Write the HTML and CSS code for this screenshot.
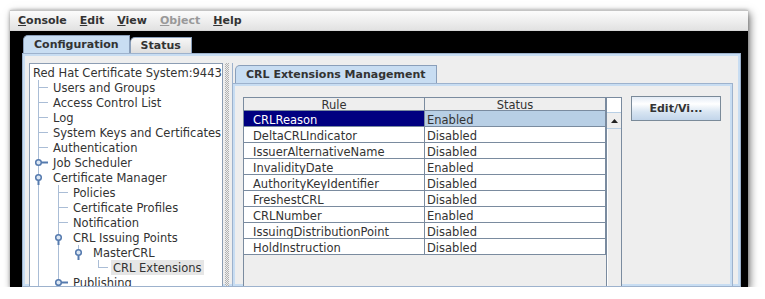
FILE: index.html
```html
<!DOCTYPE html>
<html>
<head>
<meta charset="utf-8">
<title>Console</title>
<link rel="stylesheet" href="styles.css">
</head>
<body>
<div class="window">
  <div class="menubar">
    <span class="menu"><u>C</u>onsole</span>
    <span class="menu"><u>E</u>dit</span>
    <span class="menu"><u>V</u>iew</span>
    <span class="menu disabled"><u>O</u>bject</span>
    <span class="menu"><u>H</u>elp</span>
  </div>
  <div class="frame">
    <div class="tabs">
      <div class="tab selected">Configuration</div>
      <div class="tab">Status</div>
    </div>
    <div class="panel">
      <div class="tree">
        <div class="row"><span class="label">Red Hat Certificate System:9443</span></div>
        <div class="row"><span class="seg tee"></span><span class="label">Users and Groups</span></div>
        <div class="row"><span class="seg tee"></span><span class="label">Access Control List</span></div>
        <div class="row"><span class="seg tee"></span><span class="label">Log</span></div>
        <div class="row"><span class="seg tee"></span><span class="label">System Keys and Certificates</span></div>
        <div class="row"><span class="seg tee"></span><span class="label">Authentication</span></div>
        <div class="row"><span class="seg pipe"><svg class="handle" width="20" height="15" viewBox="0 0 20 15"><line x1="8.5" y1="7.5" x2="15" y2="7.5" class="tail"/><circle cx="5.5" cy="7.5" r="2.8" class="knob"/></svg></span><span class="label">Job Scheduler</span></div>
        <div class="row"><span class="seg pipe"><svg class="handle" width="20" height="15" viewBox="0 0 20 15"><line x1="5.5" y1="10" x2="5.5" y2="15" class="tail"/><circle cx="5.5" cy="7.5" r="2.8" class="knob"/></svg></span><span class="label">Certificate Manager</span></div>
        <div class="row"><span class="seg pipe"></span><span class="seg tee"></span><span class="label">Policies</span></div>
        <div class="row"><span class="seg pipe"></span><span class="seg tee"></span><span class="label">Certificate Profiles</span></div>
        <div class="row"><span class="seg pipe"></span><span class="seg tee"></span><span class="label">Notification</span></div>
        <div class="row"><span class="seg pipe"></span><span class="seg pipe"><svg class="handle" width="20" height="15" viewBox="0 0 20 15"><line x1="5.5" y1="10" x2="5.5" y2="15" class="tail"/><circle cx="5.5" cy="7.5" r="2.8" class="knob"/></svg></span><span class="label">CRL Issuing Points</span></div>
        <div class="row"><span class="seg pipe"></span><span class="seg pipe"></span><span class="seg top"><svg class="handle" width="20" height="15" viewBox="0 0 20 15"><line x1="5.5" y1="10" x2="5.5" y2="15" class="tail"/><circle cx="5.5" cy="7.5" r="2.8" class="knob"/></svg></span><span class="label">MasterCRL</span></div>
        <div class="row"><span class="seg pipe"></span><span class="seg pipe"></span><span class="seg"></span><span class="seg ell"></span><span class="label sel">CRL Extensions</span></div>
        <div class="row"><span class="seg pipe"></span><span class="seg pipe"><svg class="handle" width="20" height="15" viewBox="0 0 20 15"><line x1="8.5" y1="7.5" x2="15" y2="7.5" class="tail"/><circle cx="5.5" cy="7.5" r="2.8" class="knob"/></svg></span><span class="label">Publishing</span></div>
      </div>
      <div class="divider"><div class="bumps"></div></div>
      <div class="right">
        <div class="rtabs"><div class="tab selected">CRL Extensions Management</div></div>
        <div class="rpanel">
          <div class="scrollpane">
            <div class="viewport">
              <div class="grid">
                <div class="th">Rule</div><div class="th">Status</div>
                <div class="td c1 selrow">CRLReason</div><div class="td c2 selrow">Enabled</div>
                <div class="td c1">DeltaCRLIndicator</div><div class="td c2">Disabled</div>
                <div class="td c1">IssuerAlternativeName</div><div class="td c2">Disabled</div>
                <div class="td c1">InvalidityDate</div><div class="td c2">Enabled</div>
                <div class="td c1">AuthorityKeyIdentifier</div><div class="td c2">Disabled</div>
                <div class="td c1">FreshestCRL</div><div class="td c2">Disabled</div>
                <div class="td c1">CRLNumber</div><div class="td c2">Enabled</div>
                <div class="td c1">IssuingDistributionPoint</div><div class="td c2">Disabled</div>
                <div class="td c1">HoldInstruction</div><div class="td c2">Disabled</div>
              </div>
            </div>
            <div class="vscroll">
              <div class="corner"></div>
              <div class="upbtn"><svg width="7" height="4" viewBox="0 0 7 4"><polygon points="0,4 7,4 3.5,0" fill="#222"/></svg></div>
              <div class="track"></div>
            </div>
          </div>
          <button class="btn">Edit/Vi...</button>
        </div>
      </div>
    </div>
  </div>
</div>
</body>
</html>
```
FILE: styles.css
```css
* { box-sizing: border-box; }

body {
  margin: 0;
  background: #ffffff;
  font-family: "DejaVu Sans", sans-serif;
  color: #333333;
}

.window {
  margin: 10px 0 0 10px;
  width: 738px;
  height: 277px;
  display: flex;
  flex-direction: column;
  background: #000000;
  box-shadow: 2px 3px 8px rgba(0, 0, 0, 0.55), 0 0 3px rgba(0, 0, 0, 0.25);
  overflow: hidden;
}

.menubar {
  height: 21px;
  flex: none;
  display: flex;
  align-items: center;
  gap: 13px;
  padding-left: 8px;
  border-top: 1px solid #c4c4c4;
  border-bottom: 1px solid #d6d6d6;
  background: linear-gradient(#fcfcfc, #e2e2e2);
  font-weight: bold;
  font-size: 11px;
}

.menu.disabled { color: #999999; }

.frame {
  flex: 1;
  min-height: 0;
  display: flex;
  flex-direction: column;
  padding: 4px 7px 0 12px;
}

.tabs {
  display: flex;
  align-items: flex-end;
  height: 18px;
  flex: none;
  padding-left: 1px;
}

.tab {
  font-weight: bold;
  font-size: 11px;
  padding: 0 10px;
  height: 16px;
  line-height: 15px;
  border: 1px solid #8a9fba;
  border-bottom: none;
  border-top-left-radius: 5px;
  background: linear-gradient(#f7f7f7, #dedede);
  white-space: nowrap;
}

.tab.selected {
  height: 18px;
  line-height: 17px;
  background: #c8ddf2;
}

.panel {
  flex: 1;
  min-height: 0;
  display: flex;
  border: 1px solid #9db2cd;
  box-shadow: inset 0 0 0 2px #c8ddf2;
  background: #eeeeee;
  padding: 9px 7px 0 6px;
}

.tree {
  width: 194px;
  flex: none;
  background: #ffffff;
  border: 1px solid #8c9db3;
  border-bottom: none;
  padding-top: 1px;
  font-size: 11.5px;
  overflow: hidden;
}

.row {
  display: flex;
  align-items: flex-start;
  height: 15px;
  padding-left: 3px;
  white-space: nowrap;
}

.seg {
  width: 20px;
  height: 15px;
  flex: none;
  background-repeat: no-repeat;
}

.seg.pipe {
  background-image: linear-gradient(#aabdd6, #aabdd6);
  background-position: 5px 0;
  background-size: 1px 15px;
}

.seg.top {
  background-image: linear-gradient(#aabdd6, #aabdd6);
  background-position: 5px 0;
  background-size: 1px 8px;
}

.seg.tee {
  background-image: linear-gradient(#aabdd6, #aabdd6), linear-gradient(#aabdd6, #aabdd6);
  background-position: 5px 0, 5px 7px;
  background-size: 1px 15px, 10px 1px;
}

.seg.ell {
  background-image: linear-gradient(#aabdd6, #aabdd6), linear-gradient(#aabdd6, #aabdd6);
  background-position: 5px 0, 5px 7px;
  background-size: 1px 8px, 10px 1px;
}

.handle { display: block; }
.handle .knob { fill: #dce7f4; stroke: #557aae; stroke-width: 1.5; }
.handle .tail { stroke: #557aae; stroke-width: 2; }

.label {
  display: block;
  height: 15px;
  padding-top: 2px;
  line-height: 13px;
}

.label.sel {
  background: #e6e6e6;
  margin-left: -2px;
  padding-left: 2px;
  padding-right: 2px;
}

.divider {
  width: 9px;
  flex: none;
  padding: 0 3px 0 2px;
}

.bumps {
  height: 100%;
  background: repeating-conic-gradient(#b0b0b0 0 25%, #eeeeee 0 50%) 0 0 / 2px 2px;
}

.right {
  flex: 1;
  min-width: 0;
  display: flex;
  flex-direction: column;
  padding-top: 2px;
  border-left: 1px solid #9db2cd;
}

.rtabs {
  display: flex;
  align-items: flex-end;
  height: 18px;
  flex: none;
  padding-left: 2px;
}

.rpanel {
  flex: 1;
  min-height: 0;
  display: flex;
  align-items: flex-start;
  gap: 9px;
  border: 1px solid #9db2cd;
  border-left: none;
  border-bottom: none;
  box-shadow: inset 0 0 0 2px #c8ddf2;
  background: #eeeeee;
  padding: 13px 0 0 10px;
}

.scrollpane {
  align-self: stretch;
  display: flex;
  border: 1px solid #7a8b9f;
  border-bottom: none;
}

.viewport {
  width: 362px;
  background: #eeeeee;
}

.grid {
  display: grid;
  grid-template-columns: 181px 181px;
  font-size: 11.5px;
}

.th {
  height: 13px;
  line-height: 13px;
  padding-top: 1px;
  text-align: center;
  background: #eeeeee;
  border-right: 1px solid #7a8b9f;
  border-bottom: 1px solid #7a8b9f;
  overflow: hidden;
}

.td {
  height: 16px;
  line-height: 16px;
  padding-top: 1px;
  background: #ffffff;
  border-right: 1px solid #7a8b9f;
  border-bottom: 1px solid #7a8b9f;
  white-space: nowrap;
  overflow: hidden;
}

.td.c1 { padding-left: 9px; }
.td.c2 { padding-left: 2px; }

.td.c1.selrow { background: #000080; color: #ffffff; }
.td.c2.selrow { background: #b8cfe5; }

.vscroll {
  width: 15px;
  flex: none;
  display: flex;
  flex-direction: column;
  border-left: 1px solid #7a8b9f;
}

.corner {
  height: 15px;
  background: #ffffff;
  border-bottom: 1px solid #b8cfe5;
}

.upbtn {
  height: 16px;
  display: flex;
  align-items: center;
  justify-content: center;
  background: #eeeeee;
  border-bottom: 1px solid #b8cfe5;
}

.track {
  flex: 1;
  background: #eeeeee;
  border-left: 1px solid #ffffff;
}

.btn {
  margin-top: -1px;
  width: 90px;
  height: 25px;
  padding: 0;
  border: 1px solid #7a8a99;
  background: linear-gradient(#e4ecf6 0%, #ffffff 30%, #d8e5f2 65%, #c2d5ea 100%);
  font-family: "DejaVu Sans", sans-serif;
  font-weight: bold;
  font-size: 11px;
  color: #333333;
}
```
